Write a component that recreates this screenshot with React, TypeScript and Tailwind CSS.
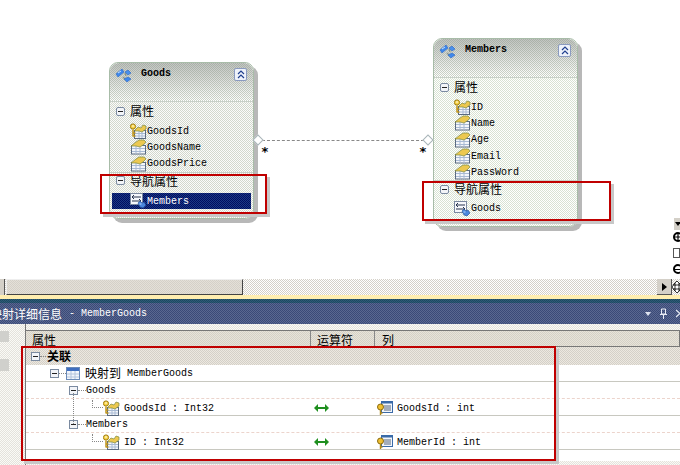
import React from 'react';

const latin = 'font-["Liberation_Mono","Noto_Sans_CJK_SC",monospace] text-[10px]';
const cjk = 'font-["Noto_Sans_CJK_SC",sans-serif] text-[12px]';

function KeyIcon() {
  return (
    <svg width="17" height="16" viewBox="0 0 17 16" className="shrink-0">
      <rect x="4.5" y="7.5" width="11" height="8" fill="#f4f6fa" stroke="#5a6a80" />
      <path d="M5 10.5h10M5 13h10M9 8v7M12 8v7" stroke="#a8bad4" />
      <path d="M5 7l3-3 3 1 2-3 3 1v3l-4 3-3-1H5z" fill="#ecc850" stroke="#7c8a40" strokeWidth="0.7" />
      <circle cx="3" cy="3.5" r="2.6" fill="#f8d448" stroke="#a07c10" />
      <circle cx="3" cy="3" r="0.8" fill="#fff" />
      <path d="M3 6.5v7M3 10h2.4M3 13h2.4" stroke="#c09418" strokeWidth="1.5" />
    </svg>
  );
}

function PropIcon() {
  return (
    <svg width="17" height="16" viewBox="0 0 17 16" className="shrink-0">
      <rect x="1.5" y="6.5" width="14" height="8.5" fill="#f4f6fa" stroke="#5a6a80" />
      <path d="M2 9.5h13M2 12.5h13M6 7v8M10 7v8" stroke="#a8bad4" />
      <path d="M1 7l5-4 3-2h5l2 2-3 3-3 2-4-1z" fill="#ecc850" stroke="#7c8a40" strokeWidth="0.7" />
    </svg>
  );
}

function NavIcon() {
  return (
    <svg width="17" height="16" viewBox="0 0 17 16" className="shrink-0">
      <rect x="0.5" y="0.5" width="12" height="11" fill="#f6f8fc" stroke="#7a88a0" />
      <path d="M2 4h9M2 8h9" stroke="#26324c" />
      <path d="M4 2L2 4l2 2M9 6l2 2-2 2" stroke="#26324c" fill="none" />
      <path d="M8 10l2-2 2 2 2-1 2 3-3 3-3-1z" fill="#4a86dc" stroke="#1f4a94" strokeWidth="0.6" />
      <path d="M9.5 11h2" stroke="#bcd8ff" />
    </svg>
  );
}

function EntityIcon() {
  return (
    <svg width="18" height="17" viewBox="0 0 18 17" className="shrink-0">
      <path d="M8 10l2 2M10 6l1 3" stroke="#8a9488" strokeWidth="1.4" />
      <path d="M1 7l6-5 2 3-6 5z" fill="#3f88ec" stroke="#2a64c0" strokeWidth="0.6" />
      <path d="M10 5l3-2 3 3-3 2z" fill="#4a90ec" stroke="#2a64c0" strokeWidth="0.6" />
      <path d="M9 12l4-2 3 2-4 3z" fill="#3f88ec" stroke="#2a64c0" strokeWidth="0.6" />
      <path d="M3 6l3-2" stroke="#c8e4ff" />
    </svg>
  );
}

function Collapse() {
  return (
    <div className="w-[13px] h-[13px] border border-[#8a9ac0] rounded-[2px] bg-[#eef2fa] flex items-center justify-center">
      <svg width="8" height="9" viewBox="0 0 8 9">
        <path d="M1 4l3-3 3 3M1 8l3-3 3 3" fill="none" stroke="#1f3f8f" strokeWidth="1.2" />
      </svg>
    </div>
  );
}

function Minus({ className = '' }: { className?: string }) {
  return (
    <div className={`w-[9px] h-[9px] border border-[#7a8aa0] bg-[#f2f4f8] flex items-center justify-center shrink-0 ${className}`}>
      <div className="w-[5px] h-px bg-[#222]" />
    </div>
  );
}

function Section({ label }: { label: string }) {
  return (
    <div className="flex items-center h-[16px] pl-[6px] gap-[5px]">
      <Minus className="rounded-[2px]" />
      <span className={`${cjk} text-black leading-none`}>{label}</span>
    </div>
  );
}

function Item({ name, icon, selected }: { name: string; icon: React.ReactNode; selected?: boolean }) {
  return (
    <div className={`flex items-center h-[16.3px] ${selected ? 'pl-[18px] bg-[repeating-conic-gradient(#000c60_0%_25%,#1c3a84_0%_50%)] bg-[length:2px_2px] text-white' : 'pl-[20px] text-black'}`}>
      {icon}
      <span className={`${latin} leading-none mt-[1px]`}>{name}</span>
    </div>
  );
}

function Card({ title, className, children }: { title: string; className: string; children: React.ReactNode }) {
  return (
    <div className={`absolute ${className} rounded-[9px] border border-[#a8bca8] bg-[length:2px_2px] shadow-[4px_4px_0_#b8b8b8]`}>
      <div className="h-[39px] border-b border-[#c8d0c8] rounded-t-[9px] bg-[linear-gradient(rgba(140,146,140,0.55),rgba(255,255,255,0)),repeating-conic-gradient(#ccd4c8_0%_25%,#ffffff_0%_50%)] [background-size:100%_100%,2px_2px] flex items-start pt-[4px] pl-[5px] pr-[6px]">
        <EntityIcon />
        <span className={`${latin} font-bold text-black ml-[8px] mt-[2px] leading-none`}>{title}</span>
        <div className="ml-auto mt-[1px]">
          <Collapse />
        </div>
      </div>
      {children}
    </div>
  );
}

function TreeRow({
  indent,
  tone,
  children,
  right,
  arrow,
}: {
  indent: string;
  tone: string;
  children: React.ReactNode;
  right?: string;
  arrow?: boolean;
}) {
  return (
    <div className={`grid grid-cols-[285px_64px_1fr] h-[17px] border-b ${tone}`}>
      <div className={`flex items-center ${indent}`}>{children}</div>
      <div className="flex items-center pl-[3px]">
        {arrow && (
          <svg width="16" height="8" viewBox="0 0 16 8">
            <path d="M0 4l4-4v3h7V0l4 4-4 4V5H4v3z" fill="#1f8f1f" />
          </svg>
        )}
      </div>
      <div className="flex items-center pl-[2px] gap-[4px]">
        {right && (
          <>
            <svg width="16" height="16" viewBox="0 0 16 16" className="shrink-0">
              <rect x="4.5" y="1.5" width="11" height="11" fill="#f2f6fc" stroke="#3a6aa8" />
              <path d="M5 2.5h10" stroke="#3a6aa8" strokeWidth="2" />
              <path d="M7 6h7M7 8h7M7 10h7" stroke="#55647a" />
              <circle cx="3.5" cy="7" r="3" fill="#f0c030" stroke="#8a6a10" />
              <path d="M3.5 10v5M3.5 13h2" stroke="#b08818" strokeWidth="1.4" />
            </svg>
            <span className={`${latin} text-black mt-[2px]`}>{right}</span>
          </>
        )}
      </div>
    </div>
  );
}

function Elbow() {
  return <span className="w-[11px] h-[8px] -mt-[8px] border-l border-b border-dotted border-[#888] shrink-0" />;
}

export default function App() {
  return (
    <div className="w-[680px] h-[465px] overflow-hidden flex flex-col bg-white">
      {/* Designer canvas */}
      <div className="relative h-[279px] shrink-0 bg-white">
        <Card title="Goods" className="left-[109px] top-[62px] w-[145px] h-[157px] bg-[repeating-conic-gradient(#d2d8cc_0%_25%,#fbfbfb_0%_50%)]">
          <div className="pt-[1px]">
            <Section label="属性" />
            <div className="pt-[4px] border-b border-[#c8d0c8]">
              <Item name="GoodsId" icon={<KeyIcon />} />
              <Item name="GoodsName" icon={<PropIcon />} />
              <Item name="GoodsPrice" icon={<PropIcon />} />
            </div>
            <Section label="导航属性" />
            <div className="mx-[2px] mt-[4px]">
              <Item name="Members" icon={<NavIcon />} selected />
            </div>
          </div>
        </Card>

        <Card title="Members" className="left-[433px] top-[38px] w-[145px] h-[189px] bg-[repeating-conic-gradient(#d8e2d2_0%_25%,#ffffff_0%_50%)]">
          <div className="pt-[1px]">
            <Section label="属性" />
            <div className="pt-[4px] border-b border-[#c8d0c8]">
              <Item name="ID" icon={<KeyIcon />} />
              <Item name="Name" icon={<PropIcon />} />
              <Item name="Age" icon={<PropIcon />} />
              <Item name="Email" icon={<PropIcon />} />
              <Item name="PassWord" icon={<PropIcon />} />
            </div>
            <Section label="导航属性" />
            <div className="mt-[3px]">
              <Item name="Goods" icon={<NavIcon />} />
            </div>
          </div>
        </Card>

        {/* Association connector */}
        <div className="absolute left-[262px] top-[140px] w-[162px] border-t border-dashed border-[#888]" />
        <div className="absolute left-[254px] top-[136px] w-[8px] h-[8px] rotate-45 border border-[#a8b4b8] bg-white" />
        <div className="absolute left-[424px] top-[136px] w-[8px] h-[8px] rotate-45 border border-[#a8b4b8] bg-white" />
        <span className="absolute left-[261px] top-[145px] text-[13px] leading-none font-bold text-black font-['DejaVu_Sans_Mono',monospace]">*</span>
        <span className="absolute left-[419px] top-[145px] text-[13px] leading-none font-bold text-black font-['DejaVu_Sans_Mono',monospace]">*</span>

        {/* Highlight boxes */}
        <div className="absolute left-[100px] top-[174px] w-[167px] h-[40px] border-2 border-[#c00000] shadow-[3px_3px_0_#c8c8c8]" />
        <div className="absolute left-[422px] top-[181px] w-[189px] h-[40px] border-2 border-[#c00000] shadow-[3px_3px_0_#c8c8c8]" />

        {/* Right edge zoom controls */}
        <div className="absolute left-[673px] top-[217px] w-[10px] flex flex-col">
          <div className="w-full h-[13px] bg-[#d4d0c8] border-t border-l border-white pl-[1px] pt-[4px]">
            <div className="w-0 border-x-[3px] border-x-transparent border-t-[4px] border-t-black" />
          </div>
          <div className="w-[10px] h-[10px] mt-[2px] rounded-full border-2 border-black bg-white flex items-center justify-center">
            <div className="w-[6px] h-[6px] bg-black [clip-path:polygon(40%_0,60%_0,60%_40%,100%_40%,100%_60%,60%_60%,60%_100%,40%_100%,40%_60%,0_60%,0_40%,40%_40%)]" />
          </div>
          <div className="w-[7px] h-[10px] mt-[6px] border border-[#555] bg-white" />
          <div className="w-[10px] h-[10px] mt-[6px] rounded-full border-2 border-black bg-white flex items-center justify-center">
            <div className="w-[6px] h-px bg-black" />
          </div>
        </div>
      </div>

      {/* Horizontal scrollbar */}
      <div className="relative h-[16px] shrink-0 flex bg-[repeating-conic-gradient(#d4d0c8_0%_25%,#ffffff_0%_50%)] bg-[length:2px_2px]">
        <div className="w-[5px] bg-[#d4d0c8] border-r border-[#555]" />
        <div className="w-[237px] ml-[1px] bg-[repeating-conic-gradient(#d4d0c8_0%_25%,#e4e0d8_0%_50%)] bg-[length:2px_2px] border-t border-l border-[#eee] border-r border-r-[#444] border-b border-b-[#444]" />
        <div className="ml-auto mr-[8px] w-[15px] bg-[#d4d0c8] border-r border-b border-[#555] flex items-center justify-center">
          <div className="border-y-[4px] border-y-transparent border-l-[5px] border-l-black" />
        </div>
        <svg width="10" height="12" viewBox="0 0 10 12" className="absolute left-[672px] top-[2px]">
          <path d="M5 0l3 3H6v2h2V3l2 3-2 3V7H6v2h2l-3 3-3-3h2V7H2v2L0 6l2-3v2h2V3H2z" fill="#fff" stroke="#000" strokeWidth="0.8" />
        </svg>
      </div>

      <div className="h-[4px] shrink-0 bg-[#ffeeb0]" />

      {/* Tool window title */}
      <div className="h-[25px] shrink-0 flex flex-col">
        <div className="h-[4px] bg-[repeating-conic-gradient(#1c4a60_0%_25%,#2f5a78_0%_50%)] bg-[length:2px_2px]" />
        <div className="flex-1 bg-[repeating-conic-gradient(#3a4a78_0%_25%,#5a6890_0%_50%)] bg-[length:2px_2px] flex items-center -ml-[10px] text-white">
          <span className={`${cjk} leading-none`}>映射详细信息</span>
          <span className={`${latin} ml-[7px] leading-none`}>- MemberGoods</span>
          <div className="ml-auto flex items-center gap-[9px]">
            <div className="border-x-[3px] border-x-transparent border-t-[4px] border-t-[#dfe4f0]" />
            <svg width="7" height="11" viewBox="0 0 7 11">
              <path d="M1.5 1h4v5h-4zM0 6.5h7M3.5 7v4" fill="none" stroke="#e8ecf4" />
            </svg>
            <svg width="4" height="9" viewBox="0 0 4 9">
              <path d="M0 1l4 3.5L0 8" fill="none" stroke="#e8ecf4" strokeWidth="1.3" />
            </svg>
          </div>
        </div>
      </div>

      {/* Mapping details */}
      <div className="relative flex-1 flex bg-[repeating-conic-gradient(#e4e2dc_0%_25%,#fafaf6_0%_50%)] bg-[length:2px_2px]">
        <div className="w-[25px] shrink-0 pt-[7px] flex flex-col gap-[17px]">
          <div className="w-[9px] h-[11px] bg-[#d0d0cc]" />
          <div className="w-[9px] h-[12px] bg-[#d0d0cc]" />
        </div>
        <div className="flex-1 pt-[6px] min-w-0 border-l border-[#777]">
          <div className="h-[17px] grid grid-cols-[285px_64px_1fr] border-y border-r border-[#777] bg-[repeating-conic-gradient(#d4d0c8_0%_25%,#e8e4d8_0%_50%)] bg-[length:2px_2px] text-black">
            <div className={`${cjk} pl-[6px] border-r border-[#888] leading-[17px]`}>属性</div>
            <div className={`${cjk} pl-[6px] border-r border-[#888] leading-[17px]`}>运算符</div>
            <div className={`${cjk} pl-[7px] leading-[17px]`}>列</div>
          </div>
          <div className="relative h-[114px] bg-white">
            <div className="h-[18px] flex items-center pl-[5px] bg-[repeating-conic-gradient(#d4d0c8_0%_25%,#ece8e0_0%_50%)] bg-[length:2px_2px]">
              <Minus />
              <span className="w-[6px] border-t border-dotted border-[#888]" />
              <span className={`${cjk} font-bold ml-[1px] text-black leading-none`}>关联</span>
            </div>
            <TreeRow indent="pl-[24px]" tone="border-[#c8c8c0]">
              <Minus />
              <span className="w-[7px] border-t border-dotted border-[#888]" />
              <svg width="14" height="13" viewBox="0 0 14 13" className="shrink-0">
                <rect x="0.5" y="0.5" width="13" height="12" fill="#f2f6fc" stroke="#6a8ab8" />
                <rect x="1" y="1" width="12" height="3" fill="#3f6fc0" />
                <path d="M1 7h12M1 10h12M5 4v8M9 4v8" stroke="#b4c4dc" />
              </svg>
              <span className={`${cjk} ml-[5px] text-black leading-none`}>映射到</span>
              <span className={`${latin} ml-[6px] mt-[2px] text-black leading-none`}>MemberGoods</span>
            </TreeRow>
            <TreeRow indent="pl-[43px]" tone="border-dashed border-[#ecd4cc]">
              <Minus />
              <span className="w-[8px] border-t border-dotted border-[#888]" />
              <span className={`${latin} mt-[2px] text-black leading-none`}>Goods</span>
            </TreeRow>
            <TreeRow indent="pl-[66px]" tone="border-[#c8c8c0]" right="GoodsId : int" arrow>
              <Elbow />
              <KeyIcon />
              <span className={`${latin} ml-[4px] mt-[2px] text-black leading-none`}>GoodsId : Int32</span>
            </TreeRow>
            <TreeRow indent="pl-[43px]" tone="border-dashed border-[#ecd4cc]">
              <Minus />
              <span className="w-[8px] border-t border-dotted border-[#888]" />
              <span className={`${latin} mt-[2px] text-black leading-none`}>Members</span>
            </TreeRow>
            <TreeRow indent="pl-[66px]" tone="border-[#c8c8c0]" right="MemberId : int" arrow>
              <Elbow />
              <KeyIcon />
              <span className={`${latin} ml-[4px] mt-[2px] text-black leading-none`}>ID : Int32</span>
            </TreeRow>
            {/* Tree guide between Goods and Members */}
            <div className="absolute left-[47px] top-[46px] h-[31px] border-l border-dotted border-[#888]" />
          </div>
        </div>
        {/* Highlight box */}
        <div className="absolute left-[21px] top-[22px] w-[535px] h-[115px] border-2 border-[#c00000] shadow-[3px_3px_0_#c8c8c8]" />
      </div>
    </div>
  );
}
